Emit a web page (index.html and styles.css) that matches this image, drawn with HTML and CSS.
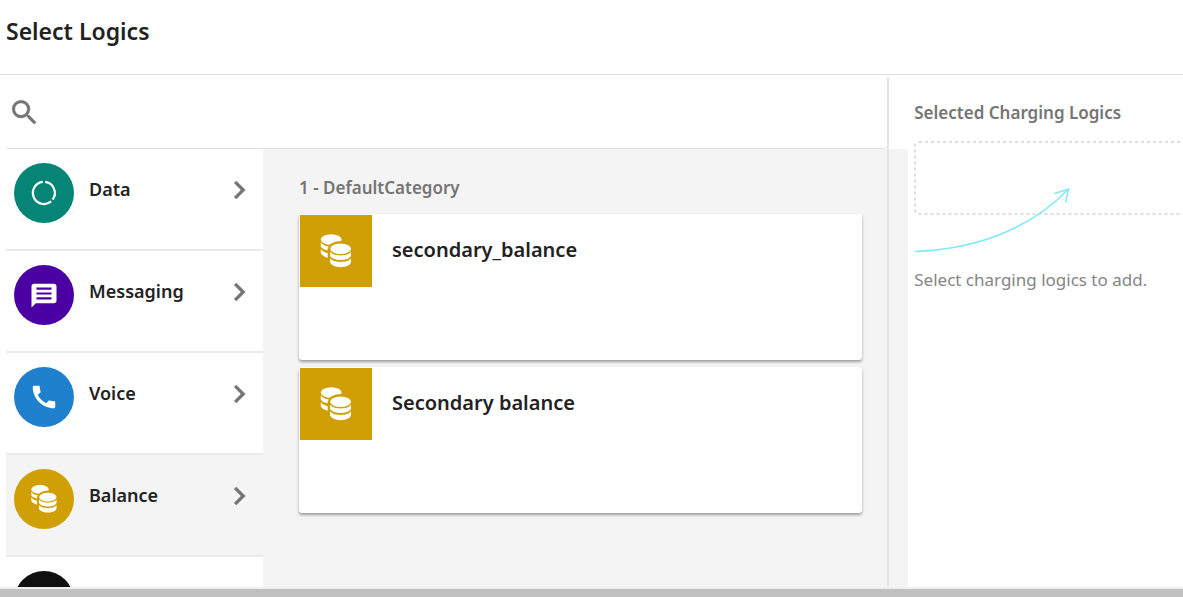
FILE: index.html
```html
<!DOCTYPE html>
<html lang="en">
<head>
<meta charset="utf-8">
<title>Select Logics</title>
<link rel="stylesheet" href="styles.css">
</head>
<body>
<svg class="sprite" aria-hidden="true">
  <symbol id="coins" viewBox="0 0 32 36">
    <mask id="coins-gap">
      <rect width="32" height="36" fill="#fff"/>
      <ellipse cx="21" cy="15.7" rx="13" ry="7.8" fill="#000"/>
      <rect x="7.7" y="15" width="25" height="21" fill="#000"/>
    </mask>
    <g fill="currentColor" mask="url(#coins-gap)">
      <ellipse cx="11.2" cy="6.5" rx="10.4" ry="5.2"/>
      <path d="M.8 9.3C2 11.6 5 13.2 9 13.6V17.6C5 17.2 2 15.8 .8 13.6Z"/>
      <path d="M.8 16C2 18.3 5 19.9 9 20.3V25C5 24.3 2 22.6 .8 20.2Z"/>
    </g>
    <g fill="currentColor">
      <ellipse cx="20.6" cy="15.7" rx="10.4" ry="5.2"/>
      <path d="M10 18.7C13 23.6 28.6 23.6 31 18.7V22.8C28.6 28.4 13 28.4 10 22.8Z"/>
      <path d="M10 25.3C13 30.2 28.6 30.2 31 25.3V29.6C28.6 35.8 13 35.8 10 29.6Z"/>
    </g>
  </symbol>
  <symbol id="chevron" viewBox="0 0 24 24">
    <path fill="currentColor" stroke="currentColor" stroke-width=".3" d="M10.2 6L8.79 7.41 13.37 12l-4.58 4.59L10.2 18l6-6z"/>
  </symbol>
</svg>
<div class="shell">
  <header class="header"><h1 class="title">Select Logics</h1></header>
  <div class="workspace">
    <main class="picker">
      <label class="search">
        <svg class="search-icon" viewBox="0 0 24 24" aria-hidden="true"><path fill="currentColor" stroke="currentColor" stroke-width=".3" d="M15.5 14h-.79l-.28-.27A6.471 6.471 0 0 0 16 9.5 6.5 6.5 0 1 0 9.5 16c1.61 0 3.09-.59 4.23-1.57l.27.28v.79l5 4.99L20.49 19l-4.99-5zm-6 0C7.01 14 5 11.99 5 9.5S7.01 5 9.5 5 14 7.01 14 9.5 11.99 14 9.5 14z"/></svg>
        <input class="search-input" type="search" aria-label="Search">
      </label>
      <div class="browser">
        <nav class="types">
          <button class="type" type="button">
            <span class="badge badge-data"><svg class="badge-icon" viewBox="0 0 32 32" aria-hidden="true"><g fill="none" stroke="currentColor" stroke-width="2.4"><path d="M17.2 4.2A11.8 11.8 0 0 1 25.2 23"/><path d="M23.6 24.9A11.8 11.8 0 1 1 14.8 4.2"/></g></svg></span>
            <span class="type-name">Data</span>
            <svg class="chevron" aria-hidden="true"><use href="#chevron"/></svg>
          </button>
          <button class="type" type="button">
            <span class="badge badge-messaging"><svg class="badge-icon" viewBox="0 0 24 24" aria-hidden="true"><path fill="currentColor" d="M20 3H4c-1.1 0-2 .9-2 2v17l3.5-3.5H20c1.1 0 2-.9 2-2V5c0-1.1-.9-2-2-2zM6 6h12v1.7H6zm0 3.9h12v1.7H6zm0 3.9h12v1.7H6z"/></svg></span>
            <span class="type-name">Messaging</span>
            <svg class="chevron" aria-hidden="true"><use href="#chevron"/></svg>
          </button>
          <button class="type" type="button">
            <span class="badge badge-voice"><svg class="badge-icon" viewBox="0 0 24 24" aria-hidden="true"><path fill="currentColor" d="M20.01 15.38c-1.23 0-2.42-.2-3.53-.56a.977.977 0 0 0-1.01.24l-1.57 1.97c-2.83-1.35-5.48-3.9-6.89-6.83l1.95-1.66c.27-.28.35-.67.24-1.02-.37-1.11-.56-2.3-.56-3.53 0-.54-.45-.99-.99-.99H4.19C3.65 3 3 3.24 3 3.99 3 13.28 10.73 21 20.01 21c.71 0 .99-.63.99-1.18v-3.45c0-.54-.45-.99-.99-.99z"/></svg></span>
            <span class="type-name">Voice</span>
            <svg class="chevron" aria-hidden="true"><use href="#chevron"/></svg>
          </button>
          <button class="type type-active" type="button" aria-current="true">
            <span class="badge badge-balance"><svg class="badge-coins" aria-hidden="true"><use href="#coins"/></svg></span>
            <span class="type-name">Balance</span>
            <svg class="chevron" aria-hidden="true"><use href="#chevron"/></svg>
          </button>
          <button class="type" type="button" aria-label="More">
            <span class="badge badge-more"></span>
          </button>
        </nav>
        <section class="results">
          <h2 class="category">1 - DefaultCategory</h2>
          <div class="cards">
            <article class="card">
              <span class="tile"><svg class="tile-coins" aria-hidden="true"><use href="#coins"/></svg></span>
              <h3 class="card-name">secondary_balance</h3>
            </article>
            <article class="card">
              <span class="tile"><svg class="tile-coins" aria-hidden="true"><use href="#coins"/></svg></span>
              <h3 class="card-name">Secondary balance</h3>
            </article>
          </div>
        </section>
      </div>
    </main>
    <aside class="selection">
      <h2 class="selection-title">Selected Charging Logics</h2>
      <div class="selection-body">
        <div class="selection-panel">
          <svg class="dropzone" aria-hidden="true"><rect class="dropzone-outline" x="1" y="1" width="150%" height="72" rx="4"/></svg>
          <svg class="arrow" viewBox="0 0 156 66" aria-hidden="true"><g fill="none" stroke="#7de8ff" stroke-width="1.5"><path d="M1 64.5C62 62 116 42 153.5 3"/><path d="M140.500 6.500L154.500 2L151.500 15.500"/></g></svg>
          <p class="hint">Select charging logics to add.</p>
        </div>
      </div>
    </aside>
  </div>
  <footer class="footer"></footer>
</div>
</body>
</html>
```

FILE: styles.css
```css
* { box-sizing: border-box; }
body {
  margin: 0;
  font-family: "Noto Sans", "Open Sans", sans-serif;
  color: #222;
  background: #fff;
}
h1, h2, h3, p { margin: 0; }
.sprite { position: absolute; width: 0; height: 0; }
.shell { display: flex; flex-direction: column; height: 100vh; overflow: hidden; }

.header { flex: none; padding: 15px 6px 27px; border-bottom: 1px solid #dedede; }
.title { font-size: 23px; line-height: 32px; font-weight: 600; }

.workspace { flex: 1; min-height: 0; display: flex; padding-top: 2px; }
.picker { flex: 1; min-width: 0; display: flex; flex-direction: column; }
.search {
  flex: none;
  display: flex;
  align-items: center;
  height: 72px;
  margin-left: 6px;
  padding-left: 2px;
  border-bottom: 1px solid #dedede;
  border-radius: 0 0 4px 4px;
}
.search-icon { flex: none; width: 33px; height: 33px; color: #757575; }
.search-input { flex: 1; min-width: 0; height: 40px; border: 0; outline: 0; background: none; font: inherit; font-size: 18px; }

.browser { flex: 1; min-height: 0; display: flex; padding-left: 6px; }
.types { flex: none; width: 257px; overflow: hidden; }
.type {
  display: flex;
  align-items: flex-start;
  width: 100%;
  height: 102px;
  padding: 14px 6px 0 8px;
  border: 0;
  border-bottom: 2px solid #ebebeb;
  background: #fff;
  color: inherit;
  font: inherit;
  text-align: left;
}
.type-active { background: #f4f4f4; }
.badge { flex: none; display: grid; place-items: center; width: 60px; height: 60px; border-radius: 50%; color: #fff; }
.badge-data { background: #068475; }
.badge-messaging { background: #4b00a4; }
.badge-voice { background: #1f80cd; }
.badge-balance { background: #d09f04; }
.badge-more { background: #101010; }
.badge-icon { width: 30px; height: 30px; }
.badge-coins { width: 28px; height: 30px; }
.type-name { flex: 1; margin: 14px 0 0 15px; font-size: 18px; line-height: 24px; font-weight: 600; }
.chevron { flex: none; width: 36px; height: 36px; margin-top: 9px; color: #757575; }

.results { flex: 1; min-width: 0; padding: 27px 25px 0 36px; background: #f4f4f4; }
.category { font-size: 17px; line-height: 24px; font-weight: 600; color: #757575; }
.cards { display: grid; gap: 7px; margin-top: 14px; }
.card {
  display: flex;
  align-items: flex-start;
  min-height: 146px;
  padding: 1px;
  background: #fff;
  border-radius: 3px;
  box-shadow: 0 2px 3px rgba(0, 0, 0, 0.36);
}
.tile { flex: none; display: grid; place-items: center; width: 72px; height: 72px; color: #fff; background: #d09f04; }
.tile-coins { width: 32px; height: 36px; }
.card-name { margin: 20px 0 0 20px; font-size: 20px; line-height: 30px; font-weight: 600; }

.selection { flex: 0 0 25%; min-width: 0; display: flex; flex-direction: column; border-left: 2px solid #e4e4e4; }
.selection-title { flex: none; height: 72px; padding: 24px 0 0 25px; font-size: 17px; line-height: 24px; font-weight: 600; color: #757575; white-space: nowrap; }
.selection-body { flex: 1; padding-left: 19px; background: #f4f4f4; }
.selection-panel { display: flex; flex-direction: column; height: 100%; padding-left: 6px; background: #fff; }
.dropzone { flex: none; width: 100%; height: 74px; margin-top: -8px; }
.dropzone-outline { fill: none; stroke: #dedede; stroke-width: 2; stroke-dasharray: 3 3; }
.arrow { flex: none; width: 156px; height: 66px; margin-top: -28px; }
.hint { margin-top: 14px; font-size: 17px; line-height: 26px; color: #858585; white-space: nowrap; }

.footer { flex: none; height: 10px; background: #c0c0c0; border-top: 2px solid #efefef; }
```
